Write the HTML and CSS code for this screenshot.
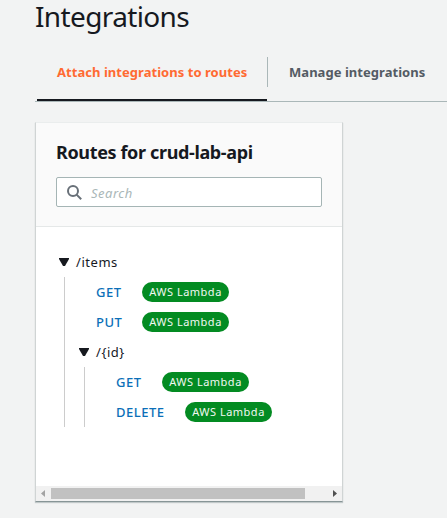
FILE: index.html
```html
<!DOCTYPE html>
<html lang="en">
<head>
<meta charset="utf-8">
<title>Integrations</title>
<link rel="stylesheet" href="styles.css">
</head>
<body>
<main class="page">
  <h1 class="title">Integrations</h1>
  <nav class="tabs">
    <a class="tab tab-active"><span class="tab-label">Attach integrations to routes</span></a>
    <a class="tab tab-next"><span class="tab-label manage">Manage integrations</span></a>
  </nav>
  <section class="card">
    <header class="card-head">
      <h2 class="card-title">Routes for crud-lab-api</h2>
      <div class="search">
        <svg class="search-icon" viewBox="0 0 15 15"><circle cx="6" cy="6" r="5"/><path d="M9.6 9.6 14.2 14.2"/></svg>
        <span class="placeholder">Search</span>
      </div>
    </header>
    <div class="tree">
      <div class="node"><svg class="caret" viewBox="0 0 10 8"><path d="M0 0h10v1L6 8H4L0 1z"/></svg><span class="items">/items</span></div>
      <div class="branch">
        <div class="route"><a class="method get">GET</a><span class="badge"><span>AWS Lambda</span></span></div>
        <div class="route"><a class="method put">PUT</a><span class="badge"><span>AWS Lambda</span></span></div>
        <div class="node"><svg class="caret" viewBox="0 0 10 8"><path d="M0 0h10v1L6 8H4L0 1z"/></svg><span class="id">/{id}</span></div>
        <div class="branch">
          <div class="route"><a class="method get">GET</a><span class="badge"><span>AWS Lambda</span></span></div>
          <div class="route"><a class="method delete">DELETE</a><span class="badge"><span>AWS Lambda</span></span></div>
        </div>
      </div>
    </div>
    <div class="scrollbar">
      <svg class="arrow" viewBox="0 0 4 7"><path fill="#a3a3a3" d="M4 0v7L0 3.5z"/></svg>
      <div class="thumb"></div>
      <svg class="arrow" viewBox="0 0 4 7"><path fill="#505050" d="M0 0v7l4-3.5z"/></svg>
    </div>
  </section>
</main>
</body>
</html>
```

FILE: styles.css
```css
* { box-sizing: border-box; }
body {
  margin: 0;
  height: 518px;
  overflow: hidden;
  background: #f2f3f3;
  color: #16191f;
  font-family: "Noto Sans", sans-serif;
  font-size: 13px;
}
.page { padding-left: 35px; }
.title {
  margin: 0;
  height: 57px;
  font-size: 28px;
  line-height: 33px;
  font-weight: 400;
  letter-spacing: -0.63px;
  white-space: nowrap;
}
.tabs {
  display: flex;
  height: 45px;
  padding-left: 2px;
  border-bottom: 1px solid #aab7b8;
}
.tab {
  height: 44px;
  font-weight: 700;
  line-height: 30px;
  letter-spacing: 0.04px;
  white-space: nowrap;
}
.tab-active {
  width: 230px;
  padding-left: 20px;
  color: #ff6a32;
  border-bottom: 2px solid #16191f;
}
.tab-next {
  height: 30px;
  padding-left: 21px;
  border-left: 1px solid #aab7b8;
  color: #545b64;
}
.card {
  display: flex;
  flex-direction: column;
  width: 308px;
  height: 380px;
  margin-top: 20px;
  background: #fff;
  border: 1px solid #d0d4d4;
  border-top-color: #eaeded;
  border-bottom-color: #879596;
  box-shadow: 0 1px 1px rgba(0, 28, 36, 0.2);
}
.card-head {
  height: 104px;
  padding: 16px 20px 0;
  background: #fafafa;
  border-bottom: 1px solid #e5e8e8;
}
.card-title {
  margin: 0 0 11px;
  font-size: 18px;
  line-height: 27px;
  letter-spacing: -0.36px;
  white-space: nowrap;
}
.search {
  display: flex;
  align-items: center;
  gap: 9px;
  height: 30px;
  padding-left: 10px;
  background: #fff;
  border: 1px solid #a5b5b5;
  border-radius: 2px;
}
.search-icon {
  width: 15px;
  height: 15px;
  fill: none;
  stroke: #687078;
  stroke-width: 2;
}
.placeholder { color: #aab7b8; font-style: italic; letter-spacing: 0.5px; line-height: 18px; padding-top: 2px; }
.tree { flex: 1; padding: 20px 0 0 20px; }
.node {
  display: flex;
  align-items: center;
  gap: 8px;
  height: 30px;
  padding-left: 3px;
  letter-spacing: 0.55px;
}
.node span { margin-left: -1px; }
.caret { width: 10px; height: 8px; fill: #16191f; }
.branch { margin-left: 8px; border-left: 1px solid #ccc; }
.branch .node { padding-left: 14px; }
.branch .branch { margin-left: 19px; }
.route {
  display: flex;
  align-items: center;
  gap: 20px;
  height: 30px;
  padding-left: 31px;
}
.method { color: #0b6fb8; font-size: 13px; font-weight: 500; letter-spacing: 0.5px; }
.get { width: 26px; }
.put { width: 26px; }
.delete { width: 49px; }
.badge {
  width: 87px;
  height: 20px;
  border-radius: 10px;
  background: #038b22;
  color: #f2f8f2;
  font-size: 11px;
  letter-spacing: 0.5px;
  line-height: 20px;
  text-align: center;
  white-space: nowrap;
}
.scrollbar {
  display: flex;
  align-items: center;
  gap: 6px;
  height: 15px;
  padding: 0 5px;
  background: #f1f1f1;
}
.arrow { width: 4px; height: 7px; flex: none; }
.thumb { width: 254px; height: 11px; margin-right: 22px; background: #c1c1c1; }
```
